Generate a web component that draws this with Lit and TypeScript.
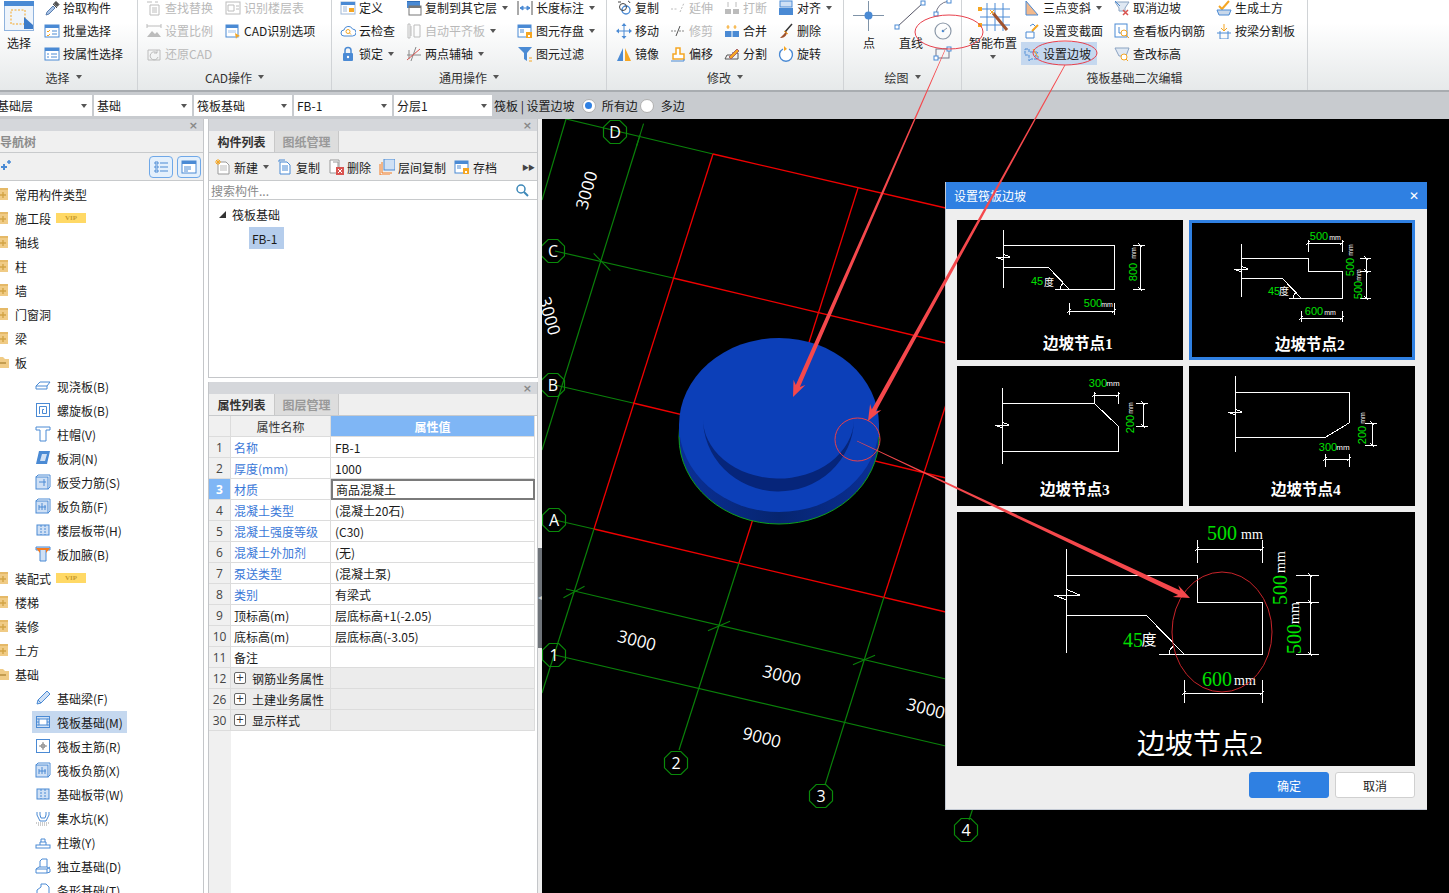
import { LitElement, html, svg, css } from "lit";
import { customElement } from "lit/decorators.js";

const B = "#4a8ad4", O = "#f5a623", G = "#bcbcbc", D = "#666", R = "#d9534f", L = "#cfe0f5";

const ICONS: Record<string, any> = {
  pick: svg`<path d="M2 15l1-3 6-6 2 2-6 6z" fill="#a9c3e6" stroke="#5a7fb0"/><path d="M9 4l4 4M10 3.5l2-2 3 3-2 2z" fill="#555" stroke="#444"/>`,
  batch: svg`<rect x="1" y="2" width="14" height="12" fill="#fff" stroke="${B}"/><rect x="1" y="2" width="14" height="3" fill="${B}"/><path d="M3 8l1 1 2-2M3 12l1 1 2-2" fill="none" stroke="${O}"/><path d="M8 8h5M8 11h5" stroke="${B}"/>`,
  prop: svg`<rect x="1" y="2" width="14" height="12" fill="#fff" stroke="${B}"/><rect x="1" y="2" width="14" height="3" fill="${B}"/><path d="M3 8h2M7 8h6M3 11h2M7 11h6" stroke="${B}"/>`,
  find: svg`<path d="M4 5h9v10H4z" fill="none" stroke="${G}"/><path d="M6 8h5M6 10h5M6 12h5M1 2h5M9 2h3" stroke="${G}"/>`,
  layerid: svg`<rect x="1" y="2" width="14" height="12" fill="none" stroke="${G}"/><path d="M3 5h6v6H3zM11 6h3M11 9h3" fill="none" stroke="${G}"/>`,
  scale: svg`<path d="M1 14l5-6 3 3 2-2 4 5z" fill="${G}"/><path d="M1 3h14M1 1v4M15 1v4" stroke="${G}"/>`,
  cadopt: svg`<rect x="1" y="2" width="12" height="12" fill="#fff" stroke="${B}"/><rect x="1" y="2" width="12" height="3" fill="${B}"/><rect x="3" y="7" width="8" height="3" fill="${L}"/><path d="M10 10l5 3-3 1-1 2z" fill="${O}"/>`,
  restore: svg`<path d="M2 4h12v10H2z" fill="none" stroke="${G}"/><path d="M11 7a4 4 0 1 0 1 4M11 4v3H8" fill="none" stroke="${G}"/>`,
  define: svg`<rect x="1" y="2" width="14" height="12" fill="#fff" stroke="#9fb7d6"/><rect x="1" y="2" width="14" height="3" fill="${B}"/><path d="M3 7h4M3 9h4M3 11h4" stroke="#9fb7d6"/><rect x="9" y="8" width="5" height="4" fill="${O}"/>`,
  cloud: svg`<path d="M4 13a3 3 0 0 1 0-6 4.5 4.5 0 0 1 8.500-1 3.500 3.500 0 0 1 0 7z" fill="#fff" stroke="${B}"/><circle cx="8" cy="8.500" r="2" fill="none" stroke="${O}"/><path d="M9.500 10l1.500 1.500" stroke="${O}"/>`,
  lock: svg`<rect x="3" y="7" width="10" height="8" rx="1" fill="${B}"/><path d="M5 7V4.500a3 3 0 0 1 6 0V7" fill="none" stroke="${B}" stroke-width="1.500"/><circle cx="8" cy="11" r="1.200" fill="#fff"/>`,
  copyto: svg`<rect x="1" y="1" width="13" height="7" fill="${B}"/><rect x="1" y="1" width="13" height="1" fill="#2f6db8"/><rect x="3" y="6" width="12" height="9" fill="#fff" stroke="#777"/><rect x="3" y="6" width="12" height="2" fill="#777"/>`,
  alignp: svg`<path d="M2 1h2v14H2zM8 2h6v12H8z" fill="none" stroke="${G}"/><path d="M5 3v10" stroke="${G}"/>`,
  axis: svg`<path d="M1 9h14M10 1l-5 14M3 4v9" stroke="#888"/><path d="M1 14L14 3" stroke="${R}"/>`,
  dim: svg`<path d="M1 1v14M15 1v14" stroke="#555"/><path d="M3 8h10M3 8l3-2v4zM13 8l-3-2v4z" stroke="${B}" fill="${B}"/>`,
  save: svg`<rect x="1" y="2" width="13" height="12" fill="#fff" stroke="${B}"/><rect x="1" y="2" width="13" height="3" fill="${B}"/><path d="M3 7h4M3 9h4" stroke="${B}"/><rect x="9" y="9" width="6" height="6" fill="${O}"/><rect x="11" y="12" width="2" height="2" fill="#fff"/>`,
  filter: svg`<path d="M1 1h14l-5 6v8l-3-2V7z" fill="${B}"/><path d="M12 12h3M12 15h3" stroke="${O}"/>`,
  copy2: svg`<circle cx="10" cy="10" r="4" fill="#fff" stroke="${B}" stroke-width="1.400"/><circle cx="7" cy="7" r="3.500" fill="none" stroke="#444"/><path d="M2 2h3M12 1a3 3 0 0 1 2 2" stroke="#444" fill="none"/>`,
  move: svg`<path d="M8 2v12M2 8h12" stroke="${B}"/><path d="M8 0l2.500 3h-5zM8 16l2.500-3h-5zM0 8l3-2.500v5zM16 8l-3-2.500v5z" fill="${B}"/>`,
  mirror: svg`<path d="M7 2v13H1z" fill="${B}"/><path d="M9 2v13h6z" fill="${O}"/>`,
  extend: svg`<path d="M1 9h7M10 12l4-9" stroke="${G}" stroke-dasharray="2 1.500"/>`,
  trim: svg`<path d="M1 8h5M9 8h6" stroke="#888" stroke-dasharray="2 1"/><path d="M6 13l4-10" stroke="#555"/>`,
  offset: svg`<path d="M3 13V8h3V2h4v6h4v5z" fill="#fff" stroke="${O}" stroke-width="1.500"/><path d="M1 15h13V13" fill="none" stroke="${B}"/>`,
  brk: svg`<rect x="1" y="9" width="6" height="5" fill="${G}"/><rect x="9" y="9" width="6" height="5" fill="${G}"/><path d="M4 2v5M12 2v5" stroke="${G}"/>`,
  merge: svg`<rect x="1" y="8" width="14" height="6" fill="${B}"/><path d="M8 8v6" stroke="#fff"/><path d="M4 2v4M2.500 4h3M11 2v4M9.500 4h3" stroke="${O}"/>`,
  split: svg`<path d="M1 13h13v-6H8" fill="none" stroke="#555"/><path d="M1 13l2-4h5" fill="none" stroke="#555"/><path d="M5 11l8-8 2 2-8 8z" fill="${O}" stroke="#a66"/>`,
  alignb: svg`<rect x="2" y="1" width="12" height="6" fill="#cfe0f5" stroke="${B}"/><rect x="1" y="8" width="14" height="7" fill="${B}"/>`,
  del: svg`<path d="M14 1L7 9" stroke="#333" stroke-width="1.500"/><path d="M8 8l-2 3-4 4c3 0 6-1 7-5z" fill="#a0522d"/><path d="M6 8l4 3" stroke="${O}"/>`,
  rotate: svg`<path d="M5 3a6.500 6.500 0 1 0 6 0" fill="#fff" stroke="${B}" stroke-width="1.400"/><path d="M6 0v5l3-2z" fill="${O}"/>`,
  tri3: svg`<path d="M2 1v14h12z" fill="#f2b98c" stroke="${B}"/>`,
  varsec: svg`<path d="M2 9h8v6H2zM6 3l3-2 3 3-4 5" fill="#fff" stroke="${B}"/><path d="M8 8l6-6" stroke="${O}" stroke-width="2"/>`,
  slope: svg`<path d="M1 3h4v3h9l-3 4h3v3H7l-2 2V9H1z" fill="none" stroke="${B}" stroke-dasharray="3 1"/><path d="M9 3l5 8" stroke="${O}"/>`,
  cancel: svg`<path d="M1 2h14l-4 6v3H5V8z" fill="#dfe8f3" stroke="#8aa3c2"/><path d="M1 1l5 5" stroke="${B}"/><path d="M9 10l5 5M14 10l-5 5" stroke="${R}" stroke-width="1.500"/>`,
  rebar: svg`<rect x="1" y="1" width="12" height="13" fill="#fff" stroke="${B}"/><path d="M5 4v6h5" fill="none" stroke="${B}"/><circle cx="10" cy="10" r="3" fill="#fff" stroke="${O}"/><path d="M12 12l3 3" stroke="${O}"/>`,
  elev: svg`<path d="M1 2h14l-3 8H5z" fill="#dfe8f3" stroke="#8aa3c2"/><circle cx="10" cy="11" r="3" fill="#fff" stroke="${O}"/><path d="M12 13l2 2" stroke="${O}"/>`,
  soil: svg`<path d="M3 6l3 3 7-8" fill="none" stroke="${O}" stroke-width="2"/><path d="M1 10h14l-2 5H3z" fill="#c9d8ea" stroke="${B}"/>`,
  beamsplit: svg`<path d="M8 1v7M5 5l3 3 3-3" fill="none" stroke="${O}"/><path d="M1 10h14M4 8v8h8V8" fill="none" stroke="${B}"/>`,
  slab: svg`<path d="M1 8l4-4h10l-3 4v3H1zM1 8h11" fill="#fff" stroke="${B}"/>`,
  spiral: svg`<rect x="1.500" y="1.500" width="13" height="13" fill="none" stroke="${B}"/><path d="M4.500 12V4.500h7v7H7.500V7.500h1.500" fill="none" stroke="${B}"/>`,
  cap: svg`<path d="M1 1h14v3h-4v11H5V4H1z" fill="#fff" stroke="${B}"/>`,
  hole: svg`<path d="M1 14l3-13h11l-3 13z" fill="${B}"/><path d="M5 11l2-7h5l-2 7z" fill="${L}"/>`,
  srebar: svg`<rect x="1" y="3" width="12" height="12" fill="${L}" stroke="${B}"/><path d="M1 3l2-2h12v12l-2 2M4 8h7M9 5v7" fill="none" stroke="${B}"/>`,
  nrebar: svg`<rect x="1" y="3" width="12" height="12" fill="${L}" stroke="${B}"/><path d="M1 3l2-2h12v12l-2 2M7 5v7M4 9h7M4 7v5M10 7v5" fill="none" stroke="${B}"/>`,
  band: svg`<rect x="2" y="3" width="12" height="10" fill="${L}" stroke="${B}"/><path d="M6 3v10M10 3v10" stroke="${B}" stroke-dasharray="2 1"/>`,
  haunch: svg`<path d="M1 1h14v3h-4v11H5V4H1z" fill="${L}" stroke="${B}"/><path d="M1 2h14l-4 5V4H5v3z" fill="#f47b20"/>`,
  fbeam: svg`<path d="M2 14l1-4 9-9 3 3-9 9z" fill="${L}" stroke="${B}"/><path d="M3 10l3 3" stroke="${B}"/>`,
  raft: svg`<rect x="1.500" y="2.500" width="13" height="11" fill="${L}" stroke="${B}"/><rect x="4" y="5" width="8" height="6" fill="#fff" stroke="${B}"/><path d="M1 5h3M1 8h3M1 11h3M12 5h3M12 8h3M12 11h3" stroke="${B}"/>`,
  mainr: svg`<rect x="1.500" y="1.500" width="13" height="13" fill="#fff" stroke="${B}"/><path d="M8 4v8M4 8h8" stroke="#888"/><circle cx="8" cy="8" r="2" fill="none" stroke="#888"/>`,
  pit: svg`<path d="M2 2v3l3 6h6l3-6V2M5 2v3l1 3h4l1-3V2" fill="none" stroke="${B}"/><path d="M1 13h14M3 15h10" stroke="#999" stroke-dasharray="1 1"/>`,
  pier: svg`<rect x="1" y="11" width="14" height="3" fill="#fff" stroke="${B}"/><path d="M5 11V8h6v3M6 8V5h4v3" fill="none" stroke="${B}"/>`,
  isol: svg`<path d="M1 11l3-2h8l3 2v3l-3 1H1zM1 11h11v4M12 11l3-2M5 9V3l2-2h5v8" fill="#fff" stroke="${B}"/>`,
  strip: svg`<path d="M2 15V8l4-3V2h5l3 3v10z" fill="#fff" stroke="${B}"/>`,
  addnode: svg`<path d="M5 8h6M8 5v6" stroke="${B}" stroke-width="2"/><path d="M11 3h4M13 1v4" stroke="${B}" stroke-width="1.500"/>`,
  list: svg`<path d="M2 3h3v2H2zM2 7h3v2H2zM2 11h3v2H2zM7 4h8M7 8h8M7 12h8" fill="none" stroke="${B}"/>`,
  win: svg`<rect x="1" y="2" width="14" height="12" fill="#fff" stroke="${B}"/><rect x="1" y="2" width="14" height="3" fill="${B}"/><path d="M3 8h7M3 10h7M3 12h4" stroke="${B}"/>`,
  newd: svg`<path d="M3 3h8l3 3v9H3z" fill="#fff" stroke="#999"/><path d="M5 7h7M5 9h7M5 11h7" stroke="#bbb"/><path d="M1 1l4 4M5 1L1 5M3 0v6M0 3h6" stroke="${O}"/>`,
  cpy: svg`<path d="M2 1h6M2 1v2" stroke="${B}" fill="none"/><path d="M3 3h7l3 3v9H3z" fill="#fff" stroke="${B}"/><path d="M5 7h6M5 9h6M5 11h6" stroke="${B}"/>`,
  dele: svg`<path d="M2 1h9v13H2z" fill="#fff" stroke="#999"/><path d="M5 3h5v5" stroke="#999" fill="none"/><rect x="8" y="8" width="8" height="8" fill="${R}"/><path d="M10 10l4 4M14 10l-4 4" stroke="#fff"/>`,
  layercopy: svg`<path d="M1 5v11h10" fill="none" stroke="#f47b20"/><path d="M3 3v11h10" fill="none" stroke="#f47b20"/><rect x="5" y="0" width="11" height="11" fill="${L}" stroke="${B}"/>`,
  search: svg`<circle cx="7" cy="7" r="4" fill="none" stroke="#3d88b8" stroke-width="1.500"/><path d="M10 10l4 4" stroke="#3d88b8" stroke-width="2"/>`,
};

const ic = (n: string) => html`<svg class="ic" viewBox="0 0 16 16">${ICONS[n]}</svg>`;

const row = (n: string, label: string, o: { dis?: boolean; tri?: boolean; hl?: boolean } = {}) => html`
  <div class="item ${o.dis ? "dis" : ""} ${o.hl ? "hl" : ""}">${ic(n)}<span>${label}</span>${o.tri ? html`<i class="tri"></i>` : ""}</div>`;

const WH = "#fff", GR = "#00e000";
const tx = (x: number, y: number, s: string, fs: number, c: string, rot = 0, ff = "Liberation Sans, Noto Sans CJK SC, sans-serif", w = 400) =>
  svg`<text x="${x}" y="${y}" font-size="${fs}" fill="${c}" font-family="${ff}" font-weight="${w}" text-anchor="middle" dominant-baseline="central" transform="${rot ? `rotate(${rot} ${x} ${y})` : ""}">${s}</text>`;
const SER = "Liberation Serif, Noto Sans CJK SC, serif";
const brk = (x: number, y: number, s = 1) => `M${x - 7 * s},${y}H${x + 7 * s}M${x - 7 * s},${y}L${x},${y + 3 * s}M${x},${y - 3 * s}L${x + 7 * s},${y}`;
const dimH = (y: number, a: number, b: number, up: number, dn: number) =>
  `M${a},${y}H${b}M${a},${y - up}V${y + dn}M${b},${y - up}V${y + dn}M${a - 2},${y + 2}L${a + 2},${y - 2}M${b - 2},${y + 2}L${b + 2},${y - 2}`;
const dimV = (x: number, ys: number[], l: number, r: number) =>
  `M${x},${ys[0]}V${ys[ys.length - 1]}` + ys.map((y) => `M${x - l},${y}H${x + r}M${x - 2},${y - 2}L${x + 2},${y + 2}`).join("");

const thumb = (d: string, extra: any, title: string, tx0: number, ty: number, big = false) => html`
  <svg class="dg" viewBox="${big ? "0 0 458 254" : "0 0 226 140"}">
    <path d="${d}" fill="none" stroke="#fff" stroke-width="1" shape-rendering="crispEdges"/>
    ${extra}
    ${big ? tx(tx0, ty, title, 28, WH, 0, SER) : tx(tx0, ty, title, 15.5, WH, 0, SER, 700)}
  </svg>`;

const t1 = thumb(
  "M46,10V68M46,25H157V69H98M46,47H91M91,47L112,69" + brk(46, 37) + dimH(91, 112, 157, 8, 4) + dimV(183, [25, 69], 7, 5) + "M103,69a8,8 0 0 1 4,-6",
  svg`${tx(80, 61, "45", 11, GR)}${tx(92, 62, "度", 10, WH)}${tx(136, 83, "500", 11, GR)}${tx(150, 84, "mm", 7, WH)}${tx(176, 52, "800", 11, GR, -90)}${tx(176, 33, "mm", 7, WH, -90)}`,
  "边坡节点1", 121, 123
);
const t2 = thumb(
  "M52,24V77M52,38H119V51H153V78H100M52,58H93M93,58L112,78" + brk(52, 49) + dimH(23, 119, 153, 3, 9) + dimH(98, 112, 153, 7, 4) + dimV(177, [38, 51, 78], 6, 5) + "M104,78a8,8 0 0 1 4,-6",
  svg`${tx(85, 71, "45", 11, GR)}${tx(95, 71, "度", 10, WH)}${tx(130, 16, "500", 11, GR)}${tx(146, 17, "mm", 7, WH)}${tx(125, 91, "600", 11, GR)}${tx(141, 92, "mm", 7, WH)}${tx(161, 47, "500", 11, GR, -90)}${tx(161, 30, "mm", 7, WH, -90)}${tx(169, 70, "500", 11, GR, -90)}${tx(169, 55, "mm", 7, WH, -90)}`,
  "边坡节点2", 121, 124
);
const t3 = thumb(
  "M45,22V98M45,37H137L161,60V85H45" + brk(45, 59) + dimH(29, 137, 161, 3, 9) + dimV(186, [37, 60], 7, 5),
  svg`${tx(141, 17, "300", 11, GR)}${tx(156, 17, "mm", 8, WH)}${tx(173, 58, "200", 11, GR, -90)}${tx(173, 42, "mm", 7, WH, -90)}`,
  "边坡节点3", 118, 123
);
const t4 = thumb(
  "M46,10V86M46,26H160V57L137,71H46" + brk(46, 46) + dimV(183, [57, 79], 7, 5) + dimH(93, 136, 160, 5, 8),
  svg`${tx(139, 81, "300", 11, GR)}${tx(154, 81, "mm", 8, WH)}${tx(173, 69, "200", 11, GR, -90)}${tx(173, 52, "mm", 7, WH, -90)}`,
  "边坡节点4", 117, 123
);
const big = thumb(
  "M109,37V141M109,63H240V90H305V142H202M109,103H189M189,103L227,142" + brk(110, 83, 1.8) + dimH(37, 240, 305, 9, 14) + dimH(181, 227, 305, 13, 10) + dimV(353, [63, 90, 142], 14, 9) + "M212,142a10,10 0 0 1 5,-8",
  svg`${tx(265, 21, "500", 20, GR, 0, SER)}${tx(295, 22, "mm", 14, WH, 0, SER)}${tx(176, 128, "45", 20, GR, 0, SER)}${tx(192, 128, "度", 15, WH, 0, SER)}${tx(260, 167, "600", 20, GR, 0, SER)}${tx(288, 168, "mm", 14, WH, 0, SER)}${tx(323, 78, "500", 20, GR, -90, SER)}${tx(323, 50, "mm", 14, WH, -90, SER)}${tx(337, 127, "500", 20, GR, -90, SER)}${tx(337, 101, "mm", 14, WH, -90, SER)}`,
  "边坡节点2", 243, 232, true
);

const oct = (x: number, y: number, s: string) => {
  const pts = Array.from({ length: 8 }, (_, i) => {
    const a = (Math.PI / 4) * i + Math.PI / 8;
    return `${(x + 12.5 * Math.cos(a)).toFixed(1)},${(y + 12.5 * Math.sin(a)).toFixed(1)}`;
  }).join(" ");
  return svg`<polygon points="${pts}" fill="none" stroke="#0a8a0a" stroke-width="1.200"/>${tx(x, y, s, 16, "#fff", 0, "Open Sans, sans-serif")}`;
};
const gl = (...p: number[]) => svg`<polyline points="${p.join(",")}" fill="none" stroke="#0a800a" stroke-width="1.200"/>`;
const rl = (...p: number[]) => svg`<polyline points="${p.join(",")}" fill="none" stroke="#f00000" stroke-width="1.300"/>`;
const tick = (x: number, y: number, ang: number) => {
  const dx = 12 * Math.cos(ang), dy = 12 * Math.sin(ang);
  return svg`<line x1="${x - dx}" y1="${y - dy}" x2="${x + dx}" y2="${y + dy}" stroke="#0a800a" stroke-width="1.100"/>`;
};

const arrow = (x1: number, y1: number, x2: number, y2: number, w1: number, w2: number, hl = 16, hw = 13) => {
  const len = Math.hypot(x2 - x1, y2 - y1), ux = (x2 - x1) / len, uy = (y2 - y1) / len, nx = -uy, ny = ux;
  const bx = x2 - ux * hl, by = y2 - uy * hl, cx = x2 - ux * (hl - 4), cy = y2 - uy * (hl - 4);
  const P = (x: number, y: number, n: number) => `${(x + nx * n).toFixed(1)},${(y + ny * n).toFixed(1)}`;
  return [P(x1, y1, w1 / 2), P(cx, cy, w2 / 2), P(bx, by, hw / 2), `${x2},${y2}`, P(bx, by, -hw / 2), P(cx, cy, -w2 / 2), P(x1, y1, -w1 / 2)].join(" ");
};

const TREE: [number, string, string, boolean?][] = [
  [0, "+", "常用构件类型"], [0, "+", "施工段", true], [0, "+", "轴线"], [0, "+", "柱"], [0, "+", "墙"], [0, "+", "门窗洞"], [0, "+", "梁"], [0, "-", "板"],
  [1, "slab", "现浇板(B)"], [1, "spiral", "螺旋板(B)"], [1, "cap", "柱帽(V)"], [1, "hole", "板洞(N)"], [1, "srebar", "板受力筋(S)"], [1, "nrebar", "板负筋(F)"], [1, "band", "楼层板带(H)"], [1, "haunch", "板加腋(B)"],
  [0, "+", "装配式", true], [0, "+", "楼梯"], [0, "+", "装修"], [0, "+", "土方"], [0, "-", "基础"],
  [1, "fbeam", "基础梁(F)"], [1, "raft", "筏板基础(M)"], [1, "mainr", "筏板主筋(R)"], [1, "nrebar", "筏板负筋(X)"], [1, "band", "基础板带(W)"], [1, "pit", "集水坑(K)"], [1, "pier", "柱墩(Y)"], [1, "isol", "独立基础(D)"], [1, "strip", "条形基础(T)"],
];

const PROPS: [string, string, string, boolean?][] = [
  ["1", "名称", "FB-1", true], ["2", "厚度(mm)", "1000", true], ["3", "材质", "商品混凝土", true], ["4", "混凝土类型", "(混凝土20石)", true],
  ["5", "混凝土强度等级", "(C30)", true], ["6", "混凝土外加剂", "(无)", true], ["7", "泵送类型", "(混凝土泵)", true], ["8", "类别", "有梁式", true],
  ["9", "顶标高(m)", "层底标高+1(-2.05)"], ["10", "底标高(m)", "层底标高(-3.05)"], ["11", "备注", ""],
];

@customElement("app-root")
export class AppRoot extends LitElement {
  static styles = css`
    :host { display: block; width: 1449px; height: 893px; position: relative; overflow: hidden; background: #fff; color: #1a1a1a; font: 12px "Noto Sans CJK SC", "Noto Sans", sans-serif; }
    * { box-sizing: border-box; }
    .ic { width: 16px; height: 16px; flex: none; display: block; }
    .root { display: flex; flex-direction: column; height: 893px; }
    .ribbon { height: 92px; flex: none; display: flex; align-items: flex-end; overflow: hidden; background: linear-gradient(#fff 25%, #e6e9ea); border-bottom: 2px solid #a8acb0; }
    .group { flex: none; height: 94px; display: flex; flex-direction: column; justify-content: flex-end; border-right: 1px solid #d0d3d6; align-self: flex-end; padding-bottom: 1px; }
    .g1 { width: 138px; } .g2 { width: 194px; } .g3 { width: 275px; } .g4 { width: 237px; } .g5 { width: 118px; } .g6 { width: 346px; }
    .cols { display: flex; height: 69px; flex: none; }
    .pl9 { padding-left: 9px; } .pl8 { padding-left: 8px; }
    .col { display: flex; flex-direction: column; flex: none; }
    .w37 { width: 38px; margin-right: 6px; } .w79 { width: 79px; } .w66 { width: 66px; } .w111 { width: 111px; } .w54 { width: 54px; } .w90 { width: 90px; } .w102 { width: 102px; } .w62 { width: 62px; }
    .item { height: 23px; display: flex; align-items: center; gap: 3px; white-space: nowrap; }
    .item.dis { color: #b9b9b9; }
    .item.hl { background: #c5d8ef; margin-left: -3px; padding-left: 3px; width: 76px; }
    .tri { display: inline-block; width: 0; height: 0; border: 3.5px solid transparent; border-top: 4px solid #555; border-bottom: 0; margin-left: 6px; }
    .item .tri { margin-left: 2px; }
    .glabel { height: 24px; flex: none; display: flex; align-items: center; justify-content: center; color: #333; }
    .glabel.shift { padding-right: 10px; }
    .big { display: flex; flex-direction: column; align-items: center; flex: none; }
    .big svg { display: block; flex: none; }
    .big span { line-height: 18px; white-space: nowrap; }
    .big .tri { margin: 3px 0 0; }
    .w50 { width: 50px; } .w34 { width: 34px; } .w33 { width: 33px; }
    .opt { height: 27px; flex: none; background: #c8cbcf; display: flex; align-items: center; gap: 2px; white-space: nowrap; }
    .combo { height: 21px; background: #fff; width: 98px; padding-left: 3px; display: flex; align-items: center; justify-content: space-between; padding-right: 5px; }
    .combo.first { width: 92px; padding-left: 0; }
    .combo.first span { margin-left: -3px; }
    .combo .tri { margin: 0; }
    .radio { width: 14px; height: 14px; border-radius: 50%; background: #fff; border: 1px solid #b0b0b0; flex: none; display: flex; align-items: center; justify-content: center; }
    .radio b { width: 7px; height: 7px; border-radius: 50%; background: #2f80e2; display: block; }
    .mr5 { margin-left: 5px; } .mr4 { margin-left: 4px; }
    .main { flex: 1; min-height: 0; display: flex; }
    .nav { width: 204px; flex: none; border-right: 1px solid #c4c6c9; display: flex; flex-direction: column; overflow: hidden; }
    .ptitle { height: 12px; flex: none; background: #d5d7db; display: flex; justify-content: flex-end; align-items: center; padding-right: 5px; color: #888; font: 700 11px "DejaVu Sans", sans-serif; }
    .navhead { height: 22px; flex: none; background: #f0f0f0; color: #8c8c8c; font-weight: 700; display: flex; align-items: center; border-bottom: 1px solid #c8cacc; }
    .navbar { height: 28px; flex: none; background: #f0f0f0; border-bottom: 1px solid #c8cacc; display: flex; align-items: center; padding-right: 2px; gap: 4px; margin-left: -4px; }
    .navbar .addn { margin-right: auto; }
    .vb { width: 24px; height: 22px; border: 1px solid #6fa8e8; border-radius: 4px; background: #e4f0fc; display: flex; align-items: center; justify-content: center; }
    .tree { padding-top: 1px; flex: 1; overflow: hidden; }
    .tr { height: 24px; display: flex; align-items: center; white-space: nowrap; }
    .tr.l1 { padding-left: 32px; }
    .fold { width: 12px; height: 14px; margin-left: -3px; margin-right: 6px; flex: none; display: block; }
    .lab { display: flex; align-items: center; gap: 6px; height: 22px; padding: 0 4px 0 3px; }
    .lab.sel { background: #c5d8ef; }
    .vip { margin-left: 5px; width: 30px; height: 10px; background: #ffd966; color: #c79a2b; font: 700 7px/10px "Liberation Serif", serif; text-align: center; }
    .mid { width: 330px; margin-left: 4px; flex: none; display: flex; flex-direction: column; }
    .p1 { height: 259px; flex: none; border: 1px solid #c4c6c9; border-width: 0 1px 1px 1px; display: flex; flex-direction: column; }
    .p2 { flex: 1; min-height: 0; margin-top: 4px; border: 1px solid #c4c6c9; border-width: 0 1px 0 1px; display: flex; flex-direction: column; }
    .tabs { height: 22px; flex: none; display: flex; background: #efefef; border-bottom: 1px solid #c8cacc; }
    .tab { width: 65px; display: flex; align-items: center; justify-content: center; font-weight: 700; color: #333; }
    .tab.off { background: #ddd; color: #999; border: 1px solid #c8c8c8; border-width: 0 1px; }
    .tbar { height: 28px; flex: none; background: #efefef; display: flex; align-items: center; gap: 8px; padding: 1px 0 0 6px; border-bottom: 1px solid #c8cacc; white-space: nowrap; }
    .tbar .more { margin-left: auto; margin-right: 3px; font-size: 7px; color: #444; letter-spacing: -1px; }
    .search { height: 19px; flex: none; display: flex; align-items: center; justify-content: space-between; padding: 0 7px 0 2px; color: #8a8a8a; border-bottom: 1px solid #c8cacc; }
    .ctree { padding: 2px 0 0 10px; flex: 1; }
    .ctr { height: 24px; display: flex; align-items: center; gap: 6px; }
    .tg { width: 0; height: 0; border-left: 7px solid transparent; border-bottom: 7px solid #333; }
    .fb { margin-left: 30px; background: #b5cdec; height: 22px; width: 35px; display: flex; align-items: center; padding-left: 3px; }
    .tablewrap { flex: 1; min-height: 0; background: linear-gradient(to right, #f0f0f0 22px, #fff 22px); }
    .grid { display: grid; grid-template-columns: 22px 100px 204px; grid-auto-rows: 21px; }
    .c { border-right: 1px solid #dcdcdc; border-bottom: 1px solid #dcdcdc; display: flex; align-items: center; padding-left: 3px; white-space: nowrap; }
    .c.n { justify-content: center; padding: 0; background: #f0f0f0; color: #444; font-family: "Open Sans", sans-serif; }
    .c.n.on { background: #7fb6f5; color: #fff; font-weight: 700; }
    .c.h { justify-content: center; background: #f0f0f0; padding: 0; color: #333; }
    .c.hv { justify-content: center; background: #7fb6f5; color: #fff; padding: 0; font-weight: 700; }
    .c.v { padding-left: 4px; }
    .c.blue { color: #3a78d8; }
    .c.edit { border: 2px solid #7a7a7a; padding-left: 3px; }
    .c.gp { background: #ececec; gap: 6px; }
    .plus { width: 12px; height: 12px; border: 1px solid #666; border-radius: 2px; background: #fff; flex: none; font: 10px/10px "DejaVu Sans", sans-serif; text-align: center; color: #333; }
    .split { width: 4px; flex: none; background: #eeeeee; }
    .handle { width: 4px; height: 100px; background: #6f747a; margin-top: 429px; color: #ccc; font: 8px/100px "DejaVu Sans", sans-serif; overflow: hidden; display: flex; align-items: center; justify-content: center; }
    .canvas { flex: 1; min-width: 0; background: #000; position: relative; overflow: hidden; }
    .canvas > svg { display: block; }
    .dialog { position: absolute; left: 403px; top: 63px; width: 482px; height: 628px; background: #eee; border-left: 1px solid #c4cad4; border-bottom: 1px solid #c4cad4; display: flex; flex-direction: column; }
    .dtitle { height: 27px; flex: none; background: #2f80e2; color: #fff; display: flex; align-items: center; justify-content: space-between; padding: 0 8px; }
    .dtitle .x { font: 700 12px "DejaVu Sans", sans-serif; }
    .dbody { padding: 11px 0 0 11px; display: flex; flex-direction: column; gap: 6px; }
    .tgrid { display: grid; grid-template-columns: 226px 226px; grid-auto-rows: 140px; gap: 6px; }
    .th { background: #000; overflow: hidden; }
    .th.sel { box-shadow: inset 0 0 0 3px #2f80e2; }
    .dg { display: block; width: 100%; height: 100%; }
    .bigp { width: 458px; height: 254px; background: #000; }
    .btns { display: flex; justify-content: flex-end; gap: 6px; width: 458px; }
    .btn { width: 80px; height: 26px; border-radius: 3px; display: flex; align-items: center; justify-content: center; background: #fff; border: 1px solid #d0d0d0; }
    .btn.pri { background: #2f80e2; color: #fff; border-color: #2f80e2; }
    .over { position: absolute; left: 0; top: 0; width: 1449px; height: 893px; pointer-events: none; }
  `;

  folder(sign: string) {
    return sign === "+"
      ? html`<svg class="fold" viewBox="0 0 12 14"><path d="M1 1h10v12H1z" fill="#f0cb85"/><path d="M1 1h10v2H1z" fill="#e5b967"/><path d="M6 5v6M3 8h6" stroke="#d2a445" stroke-width="1.400"/></svg>`
      : html`<svg class="fold" viewBox="0 0 12 14"><path d="M0 2h6l2 2h4v9H0z" fill="#f0cb85"/><path d="M3 8h6" stroke="#b08a3a" stroke-width="1.400"/></svg>`;
  }

  render() {
    const combos = ["基础", "筏板基础", "FB-1", "分层1"];
    return html`
      <div class="root">
        <div class="ribbon">
          <div class="group g1">
            <div class="cols">
              <div class="big w37">
                <svg width="38" height="38" viewBox="0 -1 38 38"><rect x="4.500" y="4.500" width="29" height="29" fill="#eef4fb" stroke="#8fb3de"/><rect x="4" y="4" width="30" height="5" fill="#4a8ad4"/><path d="M11 13h14v14H11z" fill="none" stroke="#f5a623" stroke-dasharray="2 1.500"/><path d="M24 20l9 8v4h-9z" fill="#3d7cc9"/></svg>
                <span>选择</span>
              </div>
              <div class="col">${row("pick", "拾取构件")}${row("batch", "批量选择")}${row("prop", "按属性选择")}</div>
            </div>
            <div class="glabel shift">选择<i class="tri"></i></div>
          </div>
          <div class="group g2">
            <div class="cols pl8">
              <div class="col w79">${row("find", "查找替换", { dis: true })}${row("scale", "设置比例", { dis: true })}${row("restore", "还原CAD", { dis: true })}</div>
              <div class="col">${row("layerid", "识别楼层表", { dis: true })}${row("cadopt", "CAD识别选项")}</div>
            </div>
            <div class="glabel">CAD操作<i class="tri"></i></div>
          </div>
          <div class="group g3">
            <div class="cols pl8">
              <div class="col w66">${row("define", "定义")}${row("cloud", "云检查")}${row("lock", "锁定", { tri: true })}</div>
              <div class="col w111">${row("copyto", "复制到其它层", { tri: true })}${row("alignp", "自动平齐板", { dis: true, tri: true })}${row("axis", "两点辅轴", { tri: true })}</div>
              <div class="col">${row("dim", "长度标注", { tri: true })}${row("save", "图元存盘", { tri: true })}${row("filter", "图元过滤")}</div>
            </div>
            <div class="glabel">通用操作<i class="tri"></i></div>
          </div>
          <div class="group g4">
            <div class="cols pl9">
              <div class="col w54">${row("copy2", "复制")}${row("move", "移动")}${row("mirror", "镜像")}</div>
              <div class="col w54">${row("extend", "延伸", { dis: true })}${row("trim", "修剪", { dis: true })}${row("offset", "偏移")}</div>
              <div class="col w54">${row("brk", "打断", { dis: true })}${row("merge", "合并")}${row("split", "分割")}</div>
              <div class="col">${row("alignb", "对齐", { tri: true })}${row("del", "删除")}${row("rotate", "旋转")}</div>
            </div>
            <div class="glabel">修改<i class="tri"></i></div>
          </div>
          <div class="group g5">
            <div class="cols">
              <div class="big w50">
                <svg width="50" height="38" viewBox="0 -1 50 38"><path d="M9 18.500h31M24.500 4v30" stroke="#7f93a8"/><circle cx="24.500" cy="18.500" r="4" fill="#4a8ad4"/></svg>
                <span>点</span>
              </div>
              <div class="big w34">
                <svg width="34" height="38" viewBox="0 -1 34 38"><path d="M3 30L29 6" stroke="#556"/><rect x="1" y="28" width="4" height="4" fill="#fff" stroke="#4a8ad4"/><rect x="27" y="4" width="4" height="4" fill="#fff" stroke="#4a8ad4"/></svg>
                <span>直线</span>
              </div>
              <div class="big w33">
                <svg width="33" height="69" viewBox="0 -1 33 69">
                  <path d="M8 17Q9 6 21 4" fill="none" stroke="#778"/><rect x="6" y="15" width="4" height="4" fill="#fff" stroke="#4a8ad4"/><rect x="19" y="2" width="4" height="4" fill="#fff" stroke="#4a8ad4"/>
                  <circle cx="15" cy="34" r="8" fill="none" stroke="#8b98a8" stroke-width="1.200"/><circle cx="15" cy="34" r="1.300" fill="#4a8ad4"/><path d="M15 34l4-3" stroke="#8b98a8"/>
                  <rect x="8" y="52" width="13" height="9" fill="none" stroke="#778"/><rect x="19" y="50" width="4" height="4" fill="#fff" stroke="#4a8ad4"/><rect x="6" y="59" width="4" height="4" fill="#fff" stroke="#4a8ad4"/>
                </svg>
              </div>
            </div>
            <div class="glabel">绘图<i class="tri"></i></div>
          </div>
          <div class="group g6">
            <div class="cols">
              <div class="big w62">
                <svg width="60" height="38" viewBox="0 -1 60 38"><path d="M17 12h30M17 20h30M17 28h30M24 6v28M32 6v28M40 6v28" stroke="#4a8ad4"/><rect x="15" y="10" width="4" height="4" fill="#f5a623"/><rect x="15" y="26" width="4" height="4" fill="#f5a623"/><path d="M30 16l14 17" stroke="#a0522d" stroke-width="3"/><path d="M27 13l4 4M31 13l-4 4" stroke="#f5a623"/></svg>
                <span>智能布置</span>
                <i class="tri"></i>
              </div>
              <div class="col w90">${row("tri3", "三点变斜", { tri: true })}${row("varsec", "设置变截面")}${row("slope", "设置边坡", { hl: true })}</div>
              <div class="col w102">${row("cancel", "取消边坡")}${row("rebar", "查看板内钢筋")}${row("elev", "查改标高")}</div>
              <div class="col">${row("soil", "生成土方")}${row("beamsplit", "按梁分割板")}</div>
            </div>
            <div class="glabel">筏板基础二次编辑</div>
          </div>
        </div>

        <div class="opt">
          <div class="combo first"><span>基础层</span><i class="tri"></i></div>
          ${combos.map((c) => html`<div class="combo"><span>${c}</span><i class="tri"></i></div>`)}
          <span>筏板 | 设置边坡</span>
          <div class="radio mr5"><b></b></div>
          <span class="mr4">所有边</span>
          <div class="radio"></div>
          <span class="mr5">多边</span>
        </div>

        <div class="main">
          <div class="nav">
            <div class="ptitle">×</div>
            <div class="navhead">导航树</div>
            <div class="navbar">
              <div class="addn">${ic("addnode")}</div>
              <div class="vb">${ic("list")}</div>
              <div class="vb">${ic("win")}</div>
            </div>
            <div class="tree">
              ${TREE.map(([lv, icn, label, vip]) =>
                lv === 0
                  ? html`<div class="tr">${this.folder(icn)}<span>${label}</span>${vip ? html`<div class="vip">VIP</div>` : ""}</div>`
                  : html`<div class="tr l1"><div class="lab ${label === "筏板基础(M)" ? "sel" : ""}">${ic(icn)}<span>${label}</span></div></div>`
              )}
            </div>
          </div>

          <div class="mid">
            <div class="p1">
              <div class="ptitle">×</div>
              <div class="tabs"><div class="tab">构件列表</div><div class="tab off">图纸管理</div></div>
              <div class="tbar">
                ${row("newd", "新建", { tri: true })}${row("cpy", "复制")}${row("dele", "删除")}${row("layercopy", "层间复制")}${row("save", "存档")}
                <span class="more">▶▶</span>
              </div>
              <div class="search"><span>搜索构件...</span>${ic("search")}</div>
              <div class="ctree">
                <div class="ctr"><i class="tg"></i><span>筏板基础</span></div>
                <div class="ctr"><div class="fb">FB-1</div></div>
              </div>
            </div>
            <div class="p2">
              <div class="ptitle">×</div>
              <div class="tabs"><div class="tab">属性列表</div><div class="tab off">图层管理</div></div>
              <div class="tablewrap">
                <div class="grid">
                  <div class="c n"></div><div class="c h">属性名称</div><div class="c hv">属性值</div>
                  ${PROPS.map(
                    ([n, k, v, blue]) => html`
                      <div class="c n ${n === "3" ? "on" : ""}">${n}</div>
                      <div class="c ${blue ? "blue" : ""}">${k}</div>
                      <div class="c v ${n === "3" ? "edit" : ""}">${v}</div>`
                  )}
                  ${[["12", "钢筋业务属性"], ["26", "土建业务属性"], ["30", "显示样式"]].map(
                    ([n, k]) => html`
                      <div class="c n">${n}</div>
                      <div class="c gp"><span class="plus">+</span><span>${k}</span></div>
                      <div class="c gp"></div>`
                  )}
                </div>
              </div>
            </div>
          </div>

          <div class="split"><div class="handle">◂</div></div>

          <div class="canvas">
            <svg width="907" height="774" viewBox="542 119 907 774">
              ${gl(566, 119, 713, 154)}${rl(713, 154, 950, 209)}
              ${gl(555, 251, 673, 278)}${rl(673, 278, 950, 344)}
              ${gl(555, 385, 633, 403)}${rl(633, 403, 950, 479)}
              ${gl(555, 520, 594, 529)}${rl(594, 529, 950, 613)}
              ${gl(566, 589, 950, 680)}
              ${gl(555, 655, 950, 747)}
              ${gl(566, 119, 542, 200)}
              ${gl(640, 135, 542, 450)}
              ${rl(713, 154, 594, 529)}${gl(594, 529, 542, 693)}
              ${rl(858, 188, 739, 563)}${gl(739, 563, 679, 750)}
              ${rl(950, 392, 884, 597)}${gl(884, 597, 825, 785)}
              ${gl(973, 808, 969, 820)}
              ${tick(640, 135, -1.27)}${tick(602, 262, 0.8)}${tick(574, 592, -0.5)}${tick(719, 626, -0.4)}${tick(864, 660, -0.4)}
              ${oct(615, 132, "D")}${oct(553, 251, "C")}${oct(553, 385, "B")}${oct(554, 520, "A")}${oct(554, 655, "1")}${oct(676, 763, "2")}${oct(821, 796, "3")}${oct(966, 830, "4")}
              ${tx(586, 190, "3000", 17, "#fff", -74, "Open Sans, sans-serif")}
              ${tx(550, 316, "3000", 17, "#fff", 74, "Open Sans, sans-serif")}
              ${tx(637, 640, "3000", 17, "#fff", 14, "Open Sans, sans-serif")}
              ${tx(782, 675, "3000", 17, "#fff", 14, "Open Sans, sans-serif")}
              ${tx(926, 708, "3000", 17, "#fff", 14, "Open Sans, sans-serif")}
              ${tx(762, 737, "9000", 17, "#fff", 14, "Open Sans, sans-serif")}
              <defs><linearGradient id="sd" x1="0" x2="1" y1="0" y2="0"><stop offset="0" stop-color="#0a2f96"/><stop offset=".5" stop-color="#06256f"/><stop offset="1" stop-color="#0a2f96"/></linearGradient></defs>
              <ellipse cx="779" cy="437" rx="100" ry="87" fill="url(#sd)" stroke="#0fa01a" stroke-width="1"/>
              <rect x="679" y="425" width="200" height="12" fill="#0c3fb8"/>
              <ellipse cx="779" cy="425" rx="100" ry="87" fill="#0c3fb8"/>
              <path d="M703,417A75.500 73 0 0 0 854,420A75.500 60 0 0 1 703,417Z" fill="#06257a"/>
            </svg>
            <div class="dialog">
              <div class="dtitle"><span>设置筏板边坡</span><span class="x">✕</span></div>
              <div class="dbody">
                <div class="tgrid">
                  <div class="th">${t1}</div><div class="th sel">${t2}</div><div class="th">${t3}</div><div class="th">${t4}</div>
                </div>
                <div class="bigp">${big}</div>
                <div class="btns"><div class="btn pri">确定</div><div class="btn">取消</div></div>
              </div>
            </div>
          </div>
        </div>
      </div>

      <svg class="over" viewBox="0 0 1449 893">
        <ellipse cx="949" cy="32" rx="34" ry="17" fill="none" stroke="#e8404c" stroke-width="1"/>
        <ellipse cx="1065" cy="53" rx="32" ry="12" fill="none" stroke="#e8404c" stroke-width="1"/>
        <ellipse cx="857.500" cy="439.500" rx="22.500" ry="21.500" fill="none" stroke="#e8404c" stroke-width="1"/>
        <ellipse cx="1222" cy="632" rx="50" ry="60" fill="none" stroke="#c8242a" stroke-width="1"/>
        <polygon points="${arrow(945, 50, 793, 397, 0.7, 4.5)}" fill="#f5484c"/>
        <polygon points="${arrow(1065, 65, 868, 421, 0.7, 4.5)}" fill="#f5484c"/>
        <polygon points="${arrow(857, 441, 1190, 598, 0.7, 5)}" fill="#f5484c"/>
      </svg>
    `;
  }
}
